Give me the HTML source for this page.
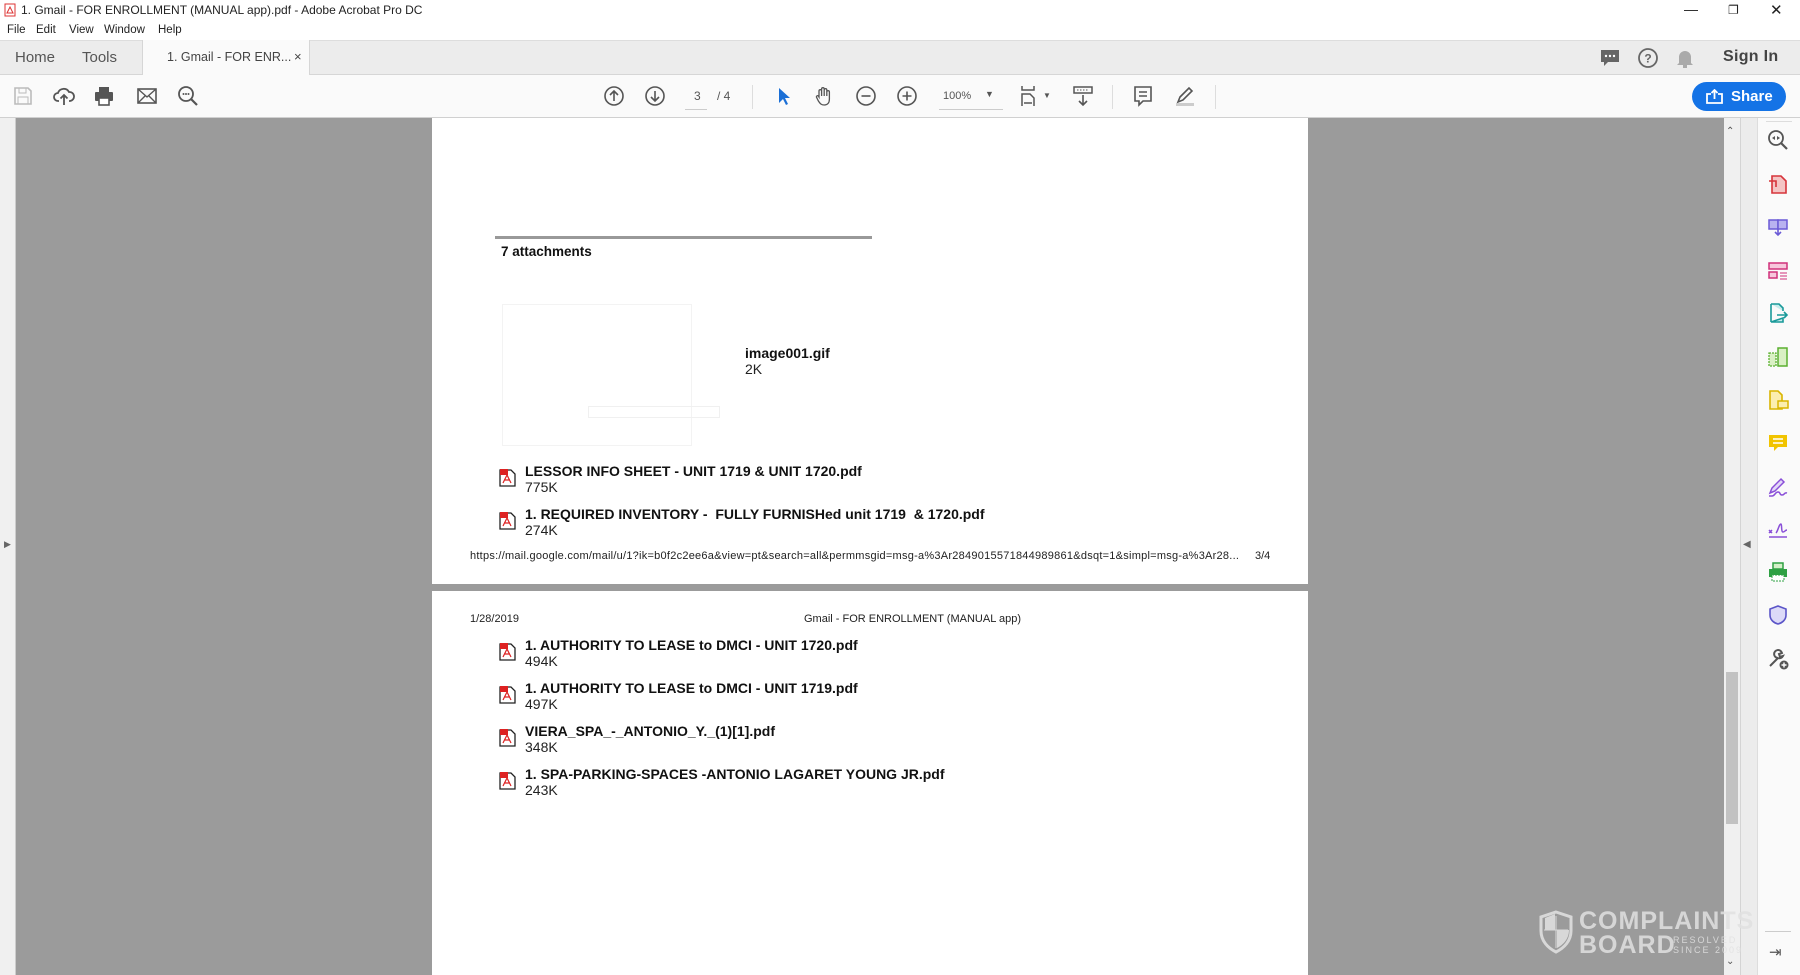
<!DOCTYPE html>
<html><head><meta charset="utf-8"><style>
*{margin:0;padding:0;box-sizing:border-box}
body{width:1800px;height:975px;overflow:hidden;font-family:"Liberation Sans",Arial,sans-serif;background:#9b9b9b;position:relative;color:#222}
.a{position:absolute}
.title{top:0;left:0;width:1800px;height:21px;background:#fff;font-size:12px;line-height:21px}
.menu{top:21px;left:0;width:1800px;height:19px;background:#fff;font-size:11.5px;line-height:19px}
.tabs{top:40px;left:0;width:1800px;height:35px;background:#ececec;border-top:1px solid #ddd;border-bottom:1px solid #d6d6d6;font-size:15px;color:#555}
.tb{top:75px;left:0;width:1800px;height:43px;background:#fafafa;border-bottom:1px solid #d0d0d0}
.ic{position:absolute;top:10px;width:22px;height:22px}
.page{background:#fff}
.b{font-weight:bold;font-size:14px;color:#111}
.s{font-size:14px;color:#222}
.pdf{position:absolute;width:17px;height:20px}
</style></head><body>
<div class="a title"><svg class="a" style="left:4px;top:3px" width="12" height="14"><rect x="1" y="1" width="10" height="12" fill="#fff" stroke="#d33"/><path d="M3 10 L6 4 L9 10 Z" fill="none" stroke="#d33"/></svg><span class="a" style="left:21px">1. Gmail - FOR ENROLLMENT (MANUAL app).pdf - Adobe Acrobat Pro DC</span>
<span class="a" style="left:1684px;top:-1px;font-size:14px">—</span><span class="a" style="left:1728px;font-size:12px">❐</span><span class="a" style="left:1770px;font-size:15px">✕</span></div>
<div class="a menu"><span class="a" style="left:7px">File</span><span class="a" style="left:36px">Edit</span><span class="a" style="left:69px">View</span><span class="a" style="left:104px">Window</span><span class="a" style="left:158px">Help</span></div>
<div class="a tabs">
<span class="a" style="left:15px;top:8px">Home</span><span class="a" style="left:82px;top:8px">Tools</span>
<div class="a" style="left:142px;top:-1px;width:168px;height:36px;background:#fafafa;border-left:1px solid #d6d6d6;border-right:1px solid #d6d6d6"><span class="a" style="left:24px;top:10px;font-size:12.5px;color:#444">1. Gmail - FOR ENR...</span><span class="a" style="left:151px;top:9px;font-size:13px;color:#444">×</span></div>
<svg class="a" style="left:1599px;top:7px" width="22" height="20"><path d="M2 2h18v12H9l-4 4v-4H2z" fill="#666"/><circle cx="7" cy="8" r="1.2" fill="#fff"/><circle cx="11" cy="8" r="1.2" fill="#fff"/><circle cx="15" cy="8" r="1.2" fill="#fff"/></svg>
<svg class="a" style="left:1637px;top:6px" width="22" height="22"><circle cx="11" cy="11" r="9" fill="none" stroke="#666" stroke-width="1.8"/><text x="11" y="15.5" font-size="12" text-anchor="middle" fill="#666" font-weight="bold" font-family="Liberation Sans">?</text></svg>
<svg class="a" style="left:1675px;top:6px" width="20" height="22"><path d="M4 16V10a6 6 0 0 1 12 0v6l2 2H2z" fill="#aaa"/><rect x="8" y="18" width="4" height="3" fill="#aaa"/></svg>
<span class="a" style="left:1723px;top:7px;font-size:16px;color:#444;font-weight:bold;letter-spacing:.3px">Sign In</span>
</div>
<div class="a tb">
<svg class="ic" style="left:12px" viewBox="0 0 22 22"><path d="M3 3h13l3 3v13H3z" fill="none" stroke="#bbb" stroke-width="1.6"/><rect x="7" y="3" width="7" height="5" fill="none" stroke="#bbb"/><rect x="6" y="12" width="10" height="7" fill="none" stroke="#bbb"/></svg>
<svg class="ic" style="left:53px" viewBox="0 0 22 22"><path d="M6 16H5a4 4 0 0 1 0-8 6 6 0 0 1 11-1 4.5 4.5 0 0 1 1 9h-1" fill="none" stroke="#555" stroke-width="1.8"/><path d="M11 20V10M7.5 13.5 11 10l3.5 3.5" fill="none" stroke="#555" stroke-width="1.8"/></svg>
<svg class="ic" style="left:93px" viewBox="0 0 22 22"><rect x="6" y="2" width="10" height="5" fill="#555"/><rect x="2" y="7" width="18" height="9" rx="1" fill="#555"/><rect x="6" y="13" width="10" height="7" fill="#fff" stroke="#555" stroke-width="1.6"/></svg>
<svg class="ic" style="left:136px" viewBox="0 0 22 22"><rect x="2" y="4" width="18" height="14" fill="none" stroke="#555" stroke-width="1.6"/><path d="M2 4l9 8 9-8M2 18l7-7M20 18l-7-7" fill="none" stroke="#555" stroke-width="1.4"/></svg>
<svg class="ic" style="left:177px" viewBox="0 0 22 22"><circle cx="9" cy="9" r="7" fill="none" stroke="#555" stroke-width="1.8"/><path d="M14 14l6 6" stroke="#555" stroke-width="2.2"/><circle cx="6.5" cy="9" r="1" fill="#555"/><circle cx="9" cy="9" r="1" fill="#555"/><circle cx="11.5" cy="9" r="1" fill="#555"/></svg>
<svg class="ic" style="left:603px" viewBox="0 0 22 22"><circle cx="11" cy="11" r="9" fill="none" stroke="#555" stroke-width="1.6"/><path d="M11 16V6M7 10l4-4 4 4" fill="none" stroke="#555" stroke-width="1.6"/></svg>
<svg class="ic" style="left:644px" viewBox="0 0 22 22"><circle cx="11" cy="11" r="9" fill="none" stroke="#555" stroke-width="1.6"/><path d="M11 6v10M7 12l4 4 4-4" fill="none" stroke="#555" stroke-width="1.6"/></svg>
<span class="a" style="left:694px;top:14px;font-size:12px;color:#555">3</span><div class="a" style="left:685px;top:34px;width:22px;height:1px;background:#ccc"></div><span class="a" style="left:717px;top:14px;font-size:12px;color:#555">/ 4</span>
<div class="a" style="left:752px;top:10px;width:1px;height:24px;background:#ddd"></div>
<svg class="ic" style="left:773px" viewBox="0 0 22 22"><path d="M6 3v15l4-4 3 6 2-1-3-6h5z" fill="#1a6fd6"/></svg>
<svg class="ic" style="left:813px" viewBox="0 0 22 22"><path d="M6 12V6a1.3 1.3 0 0 1 2.6 0V11V4a1.3 1.3 0 0 1 2.6 0v7V5a1.3 1.3 0 0 1 2.6 0v6V7a1.3 1.3 0 0 1 2.6 0v7c0 4-2 6-5 6s-4-1-6-4l-2-4a1.2 1.2 0 0 1 2-1z" fill="none" stroke="#555" stroke-width="1.3"/></svg>
<svg class="ic" style="left:855px" viewBox="0 0 22 22"><circle cx="11" cy="11" r="9" fill="none" stroke="#555" stroke-width="1.6"/><path d="M6.5 11h9" stroke="#555" stroke-width="1.6"/></svg>
<svg class="ic" style="left:896px" viewBox="0 0 22 22"><circle cx="11" cy="11" r="9" fill="none" stroke="#555" stroke-width="1.6"/><path d="M6.5 11h9M11 6.5v9" stroke="#555" stroke-width="1.6"/></svg>
<span class="a" style="left:943px;top:15px;font-size:11px;color:#555">100%</span><span class="a" style="left:985px;top:14px;font-size:9px;color:#555">▼</span><div class="a" style="left:939px;top:34px;width:64px;height:1px;background:#ccc"></div>
<svg class="ic" style="left:1019px" viewBox="0 0 22 22"><path d="M3 1v4h12V1M3 21V9h8l4 4v8M5 18h8" fill="none" stroke="#555" stroke-width="1.5"/></svg><span class="a" style="left:1043px;top:16px;font-size:8px;color:#555">▼</span>
<svg class="ic" style="left:1072px" viewBox="0 0 22 22"><rect x="2" y="2" width="18" height="6" fill="none" stroke="#555" stroke-width="1.5"/><path d="M5 5h12" stroke="#555" stroke-dasharray="1.5 1.5"/><path d="M11 10v10M7 16l4 4 4-4" fill="none" stroke="#555" stroke-width="1.6"/></svg>
<div class="a" style="left:1112px;top:10px;width:1px;height:24px;background:#ddd"></div>
<svg class="ic" style="left:1132px" viewBox="0 0 22 22"><path d="M3 2h16v14h-8l-4 4v-4H3z" fill="none" stroke="#555" stroke-width="1.6"/><path d="M7 7h8M7 11h8" stroke="#555" stroke-width="1.4"/></svg>
<svg class="ic" style="left:1174px" viewBox="0 0 22 22"><path d="M4 17l2-5L15 3l3 3-9 9z" fill="none" stroke="#555" stroke-width="1.6"/><rect x="2" y="18" width="18" height="3" fill="#ccc"/></svg>
<div class="a" style="left:1215px;top:10px;width:1px;height:24px;background:#ddd"></div>
<div class="a" style="left:1692px;top:7px;width:94px;height:29px;background:#1473e6;border-radius:15px;color:#fff;font-weight:bold;font-size:15px;line-height:29px"><svg class="a" style="left:14px;top:7px" width="17" height="15"><path d="M5 5H1v9h15V5h-4M8.5 10V1M5.5 4l3-3 3 3" fill="none" stroke="#fff" stroke-width="1.8"/></svg><span class="a" style="left:39px">Share</span></div>
</div>
<div class="a" style="left:0;top:118px;width:16px;height:857px;background:#f0f0f0;border-right:1px solid #ccc"></div>
<span class="a" style="left:4px;top:539px;font-size:9px;color:#666">▶</span>
<div class="a" style="left:1724px;top:118px;width:16px;height:857px;background:#f0f0f0"></div>
<div class="a" style="left:1726px;top:672px;width:12px;height:152px;background:#c2c2c2"></div>
<span class="a" style="left:1726px;top:126px;font-size:10px;color:#555">⌃</span>
<span class="a" style="left:1726px;top:956px;font-size:10px;color:#555">⌄</span>
<div class="a" style="left:1740px;top:118px;width:17px;height:857px;background:#ececec;border-left:1px solid #d4d4d4"></div>
<span class="a" style="left:1743px;top:539px;font-size:10px;color:#666">◀</span>
<div class="a" style="left:1757px;top:118px;width:43px;height:857px;background:#fafafa;border-left:1px solid #ddd"></div>
<svg class="a" style="left:1767px;top:129px" width="22" height="22"><circle cx="9" cy="9" r="7" fill="none" stroke="#555" stroke-width="1.8"/><path d="M14 14l6 6" stroke="#555" stroke-width="2.2"/><path d="M5 9l3-2v4z" fill="#555"/><path d="M13 9l-3-2v4z" fill="#555"/></svg>
<div class="a" style="left:1766px;top:121px;width:26px;height:1px;background:#ddd"></div>
<svg class="a" style="left:1767px;top:173px" width="22" height="22"><path d="M5 3h9l5 5v12H5z" fill="#f4c4c4" stroke="#d6343b" stroke-width="1.6"/><path d="M2 8h7v6" fill="none" stroke="#d6343b" stroke-width="1.6"/></svg>
<svg class="a" style="left:1767px;top:216px" width="22" height="22"><rect x="2" y="4" width="9" height="9" fill="#b9b2f0" stroke="#6b5bd6" stroke-width="1.5"/><rect x="11" y="4" width="9" height="9" fill="#b9b2f0" stroke="#6b5bd6" stroke-width="1.5"/><path d="M11 13v6M8 16l3 3 3-3" fill="none" stroke="#6b5bd6" stroke-width="1.6"/></svg>
<svg class="a" style="left:1767px;top:260px" width="22" height="22"><rect x="2" y="3" width="18" height="6" fill="#f7c6dc" stroke="#d0307a" stroke-width="1.5"/><rect x="2" y="12" width="8" height="6" fill="#f7c6dc" stroke="#d0307a" stroke-width="1.5"/><path d="M13 13h7M13 16h7M13 19h7" stroke="#d0307a"/></svg>
<svg class="a" style="left:1767px;top:302px" width="22" height="22"><path d="M4 2h8l4 4v3M16 16v4H4z" fill="#c8ecec" stroke="#1a9a9a" stroke-width="1.6"/><path d="M4 2v18" stroke="#1a9a9a" stroke-width="1.6"/><path d="M10 13h10M17 10l3 3-3 3" fill="none" stroke="#1a9a9a" stroke-width="1.6"/></svg>
<svg class="a" style="left:1767px;top:346px" width="22" height="22"><rect x="2" y="7" width="7" height="13" fill="#d9f0c4" stroke="#5bb030" stroke-width="1.3" stroke-dasharray="2 1"/><rect x="11" y="2" width="9" height="18" fill="#d9f0c4" stroke="#5bb030" stroke-width="1.5"/></svg>
<svg class="a" style="left:1767px;top:389px" width="22" height="22"><path d="M3 2h8l4 4v14H3z" fill="#fbeeb0" stroke="#d9b500" stroke-width="1.6"/><rect x="11" y="12" width="10" height="7" fill="#fbeeb0" stroke="#d9b500" stroke-width="1.5"/></svg>
<svg class="a" style="left:1767px;top:432px" width="22" height="22"><path d="M2 3h18v12h-9l-4 4v-4H2z" fill="#f1c400"/><path d="M6 7h10M6 11h10" stroke="#fff" stroke-width="1.4"/></svg>
<svg class="a" style="left:1767px;top:476px" width="22" height="22"><path d="M3 17l2-5L14 3l3 3-9 9z" fill="#e3d8f8" stroke="#8a4fd8" stroke-width="1.5"/><path d="M2 20h3c3 0 3-4 6-4s1 3 4 3 2-3 5-2" fill="none" stroke="#8a4fd8" stroke-width="1.5"/></svg>
<svg class="a" style="left:1767px;top:518px" width="22" height="22"><path d="M2 12l3 3M5 12l-3 3M9 15c2-2 3-9 5-9 1 0 0 8 2 8s2-2 4-2" fill="none" stroke="#8a4fd8" stroke-width="1.5"/><path d="M2 19h18" stroke="#8a4fd8" stroke-width="1.5"/></svg>
<svg class="a" style="left:1767px;top:561px" width="22" height="22"><rect x="6" y="2" width="10" height="6" fill="#d4f0c8" stroke="#2ea043" stroke-width="1.5"/><rect x="2" y="8" width="18" height="8" fill="#2ea043"/><rect x="5" y="14" width="12" height="6" fill="#fff" stroke="#2ea043" stroke-dasharray="2 1"/></svg>
<svg class="a" style="left:1767px;top:604px" width="22" height="22"><path d="M11 2l8 3v6c0 5-4 8-8 9-4-1-8-4-8-9V5z" fill="#dcdaf8" stroke="#5b55c8" stroke-width="1.6"/></svg>
<svg class="a" style="left:1767px;top:648px" width="22" height="22"><path d="M3 18l8-8M11 10a4 4 0 1 1 4-5l-3 1 1 3 3-1a4 4 0 0 1-5 2" fill="none" stroke="#555" stroke-width="2"/><circle cx="17" cy="17" r="4.5" fill="#555"/><path d="M17 14.5v5M14.5 17h5" stroke="#fff" stroke-width="1.4"/></svg>
<div class="a" style="left:1765px;top:931px;width:26px;height:1px;background:#ccc"></div>
<span class="a" style="left:1769px;top:943px;font-size:15px;color:#555">⇥</span>
<div class="a page" style="left:432px;top:118px;width:876px;height:466px">
<div class="a" style="left:63px;top:118px;width:377px;height:3px;background:#999"></div>
<div class="a b" style="left:69px;top:126px;font-size:13.5px">7 attachments</div>
<div class="a" style="left:70px;top:186px;width:190px;height:142px;border:1px solid #f3f3f3"></div>
<div class="a" style="left:156px;top:288px;width:132px;height:12px;border:1px solid #f0f0f0"></div>
<div class="a b" style="left:313px;top:227px;font-size:14px">image001.gif</div>
<div class="a s" style="left:313px;top:243px">2K</div>
<svg class="pdf" style="left:67px;top:349px" viewBox="0 0 17 20"><path d="M1 3h11l4 4v12H1z" fill="#fff" stroke="#222" stroke-width="1.3"/><path d="M1 2h8v6H1z" fill="#d22"/><path d="M4 16l4-8 4 8M5 13h6" fill="none" stroke="#d22" stroke-width="1.2"/></svg>
<div class="a b" style="left:93px;top:345px">LESSOR INFO SHEET - UNIT 1719 &amp; UNIT 1720.pdf</div>
<div class="a s" style="left:93px;top:361px">775K</div>
<svg class="pdf" style="left:67px;top:392px" viewBox="0 0 17 20"><path d="M1 3h11l4 4v12H1z" fill="#fff" stroke="#222" stroke-width="1.3"/><path d="M1 2h8v6H1z" fill="#d22"/><path d="M4 16l4-8 4 8M5 13h6" fill="none" stroke="#d22" stroke-width="1.2"/></svg>
<div class="a b" style="left:93px;top:388px;white-space:pre">1. REQUIRED INVENTORY -  FULLY FURNISHed unit 1719  &amp; 1720.pdf</div>
<div class="a s" style="left:93px;top:404px">274K</div>
<div class="a" style="left:38px;top:432px;font-size:11px;color:#222;letter-spacing:0.25px;white-space:nowrap">https://mail.google.com/mail/u/1?ik=b0f2c2ee6a&amp;view=pt&amp;search=all&amp;permmsgid=msg-a%3Ar2849015571844989861&amp;dsqt=1&amp;simpl=msg-a%3Ar28...</div>
<div class="a" style="left:823px;top:432px;font-size:11px;color:#222">3/4</div>
</div>
<div class="a page" style="left:432px;top:591px;width:876px;height:384px">
<div class="a" style="left:38px;top:22px;font-size:11px;color:#222">1/28/2019</div>
<div class="a" style="left:372px;top:22px;font-size:11px;color:#222">Gmail - FOR ENROLLMENT (MANUAL app)</div>
<svg class="pdf" style="left:67px;top:50px" viewBox="0 0 17 20"><path d="M1 3h11l4 4v12H1z" fill="#fff" stroke="#222" stroke-width="1.3"/><path d="M1 2h8v6H1z" fill="#d22"/><path d="M4 16l4-8 4 8M5 13h6" fill="none" stroke="#d22" stroke-width="1.2"/></svg>
<div class="a b" style="left:93px;top:46px">1. AUTHORITY TO LEASE to DMCI - UNIT 1720.pdf</div>
<div class="a s" style="left:93px;top:62px">494K</div>
<svg class="pdf" style="left:67px;top:93px" viewBox="0 0 17 20"><path d="M1 3h11l4 4v12H1z" fill="#fff" stroke="#222" stroke-width="1.3"/><path d="M1 2h8v6H1z" fill="#d22"/><path d="M4 16l4-8 4 8M5 13h6" fill="none" stroke="#d22" stroke-width="1.2"/></svg>
<div class="a b" style="left:93px;top:89px">1. AUTHORITY TO LEASE to DMCI - UNIT 1719.pdf</div>
<div class="a s" style="left:93px;top:105px">497K</div>
<svg class="pdf" style="left:67px;top:136px" viewBox="0 0 17 20"><path d="M1 3h11l4 4v12H1z" fill="#fff" stroke="#222" stroke-width="1.3"/><path d="M1 2h8v6H1z" fill="#d22"/><path d="M4 16l4-8 4 8M5 13h6" fill="none" stroke="#d22" stroke-width="1.2"/></svg>
<div class="a b" style="left:93px;top:132px">VIERA_SPA_-_ANTONIO_Y._(1)[1].pdf</div>
<div class="a s" style="left:93px;top:148px">348K</div>
<svg class="pdf" style="left:67px;top:179px" viewBox="0 0 17 20"><path d="M1 3h11l4 4v12H1z" fill="#fff" stroke="#222" stroke-width="1.3"/><path d="M1 2h8v6H1z" fill="#d22"/><path d="M4 16l4-8 4 8M5 13h6" fill="none" stroke="#d22" stroke-width="1.2"/></svg>
<div class="a b" style="left:93px;top:175px">1. SPA-PARKING-SPACES -ANTONIO LAGARET YOUNG JR.pdf</div>
<div class="a s" style="left:93px;top:191px">243K</div>
</div>
<svg class="a" style="left:1538px;top:910px" width="36" height="44"><path d="M18 2l15 5v14c0 10-7 17-15 21C10 38 3 31 3 21V7z" fill="none" stroke="#d8d8d8" stroke-width="3"/><path d="M18 6v32M6 20h24" stroke="#d8d8d8" stroke-width="1"/><path d="M7 8l10-4v16H7zM19 20h12c0 9-6 15-12 18z" fill="#d8d8d8"/></svg>
<div class="a" style="left:1579px;top:909px;font-size:25px;font-weight:bold;color:rgba(225,225,225,.85);letter-spacing:1px;line-height:24px">COMPLAINTS<br>BOARD</div>
<div class="a" style="left:1673px;top:935px;font-size:9px;color:rgba(225,225,225,.85);letter-spacing:2px;line-height:10px">RESOLVED<br>SINCE 2009</div>
</body></html>
